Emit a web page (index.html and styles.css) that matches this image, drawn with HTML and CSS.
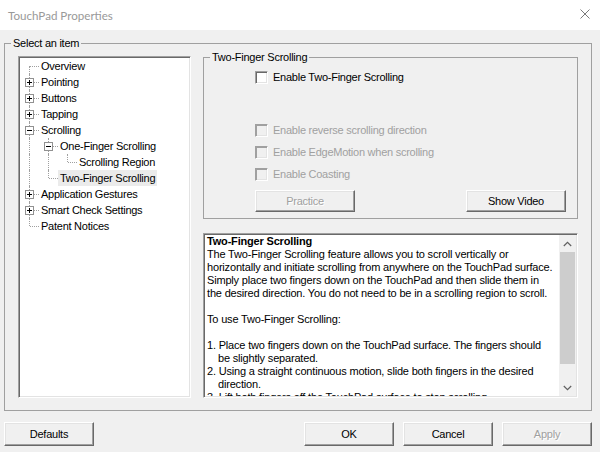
FILE: index.html
```html
<!DOCTYPE html>
<html lang="en">
<head>
  <meta charset="UTF-8">
  <meta name="viewport" content="width=device-width, initial-scale=1.0">
  <title>TouchPad Properties</title>
  <link rel="stylesheet" href="styles.css">
</head>
<body>
  <div class="titlebar">
    <span class="title">TouchPad Properties</span>
    <svg class="close" width="10" height="10" viewBox="0 0 10 10">
      <path d="M0.5 0.5 L9.5 9.5 M9.5 0.5 L0.5 9.5" stroke="#7a7a7a" stroke-width="1" fill="none"/>
    </svg>
  </div>

  <div class="dialog">
    <fieldset class="group outer">
      <legend>Select an item</legend>
      <div class="outer-body">

        <div class="tree">
          <div class="row"><span class="cell first"></span><span class="label">Overview</span></div>
          <div class="row"><span class="cell tee"><span class="exp plus"></span></span><span class="label">Pointing</span></div>
          <div class="row"><span class="cell tee"><span class="exp plus"></span></span><span class="label">Buttons</span></div>
          <div class="row"><span class="cell tee"><span class="exp plus"></span></span><span class="label">Tapping</span></div>
          <div class="row"><span class="cell tee"><span class="exp"></span></span><span class="label">Scrolling</span></div>
          <div class="row"><span class="cell pipe"></span><span class="cell tee"><span class="exp"></span></span><span class="label">One-Finger Scrolling</span></div>
          <div class="row"><span class="cell pipe"></span><span class="cell pipe"></span><span class="cell elbow"></span><span class="label">Scrolling Region</span></div>
          <div class="row"><span class="cell pipe"></span><span class="cell elbow"></span><span class="label sel">Two-Finger Scrolling</span></div>
          <div class="row"><span class="cell tee"><span class="exp plus"></span></span><span class="label">Application Gestures</span></div>
          <div class="row"><span class="cell tee"><span class="exp plus"></span></span><span class="label">Smart Check Settings</span></div>
          <div class="row"><span class="cell elbow"></span><span class="label">Patent Notices</span></div>
        </div>

        <div class="pane">
          <fieldset class="group settings">
            <legend>Two-Finger Scrolling</legend>
            <div class="settings-body">
              <div class="check"><span class="box"></span>Enable Two-Finger Scrolling</div>
              <div class="check off first-off"><span class="box"></span>Enable reverse scrolling direction</div>
              <div class="check off"><span class="box"></span>Enable EdgeMotion when scrolling</div>
              <div class="check off"><span class="box"></span>Enable Coasting</div>
              <div class="btn-row">
                <button class="btn wide" disabled>Practice</button>
                <button class="btn wide">Show Video</button>
              </div>
            </div>
          </fieldset>

          <div class="info">
            <div class="info-text">
              <div class="line head">Two-Finger Scrolling</div>
              <div class="line">The Two-Finger Scrolling feature allows you to scroll vertically or</div>
              <div class="line">horizontally and initiate scrolling from anywhere on the TouchPad surface.</div>
              <div class="line">Simply place two fingers down on the TouchPad and then slide them in</div>
              <div class="line">the desired direction. You do not need to be in a scrolling region to scroll.</div>
              <div class="line blank"></div>
              <div class="line">To use Two-Finger Scrolling:</div>
              <div class="line blank"></div>
              <div class="line">1. Place two fingers down on the TouchPad surface. The fingers should</div>
              <div class="line cont">be slightly separated.</div>
              <div class="line">2. Using a straight continuous motion, slide both fingers in the desired</div>
              <div class="line cont">direction.</div>
              <div class="line">3. Lift both fingers off the TouchPad surface to stop scrolling.</div>
            </div>
            <div class="scrollbar">
              <div class="arrow">
                <svg width="9" height="6" viewBox="0 0 9 6"><path d="M0.8 5 L4.5 1.3 L8.2 5" stroke="#606060" stroke-width="1.2" fill="none"/></svg>
              </div>
              <div class="thumb"></div>
              <div class="track"></div>
              <div class="arrow">
                <svg width="9" height="6" viewBox="0 0 9 6"><path d="M0.8 1 L4.5 4.7 L8.2 1" stroke="#606060" stroke-width="1.2" fill="none"/></svg>
              </div>
            </div>
          </div>
        </div>

      </div>
    </fieldset>

    <div class="footer">
      <button class="btn">Defaults</button>
      <div class="footer-right">
        <button class="btn">OK</button>
        <button class="btn">Cancel</button>
        <button class="btn" disabled>Apply</button>
      </div>
    </div>
  </div>
</body>
</html>
```

FILE: styles.css
```css
body {
    margin: 0;
    width: 600px;
    height: 452px;
    overflow: hidden;
    background-color: #f0f0f0;
    font-family: "Liberation Sans", Arial, sans-serif;
    font-size: 11px;
    letter-spacing: -0.25px;
    color: #000;
}

.titlebar {
    height: 30px;
    background: #fff;
    display: flex;
    align-items: center;
    justify-content: space-between;
    padding: 0 10px 0 8px;
}

.title {
    font-family: Lato, "Noto Sans", sans-serif;
    font-size: 11.6px;
    letter-spacing: 0;
    color: #999;
}

.close {
    display: block;
    margin-top: -2px;
}

.dialog {
    padding: 6px 0 0 4px;
    width: 588px;
}

/* group boxes */
.group {
    margin: 0;
    padding: 0;
    border: 1px solid #a0a0a0;
    min-width: 0;
}

.group legend {
    margin-left: 6px;
    padding: 0 2px;
    height: 14px;
    line-height: 14px;
}

.outer-body {
    display: flex;
    padding: 0 13px 12px 13px;
}

/* tree view */
.tree {
    width: 173px;
    height: 342px;
    margin-top: 6px;
    margin-right: 12px;
    padding: 1px;
    box-sizing: border-box;
    background: #fff;
    border: 1px solid;
    border-color: #a0a0a0 #fff #fff #a0a0a0;
    box-shadow: inset 1px 1px 0 #696969, inset -1px -1px 0 #e3e3e3;
    flex: none;
}

.row {
    display: flex;
    height: 16px;
    white-space: nowrap;
}

.cell {
    position: relative;
    width: 19px;
    height: 16px;
    flex: none;
}

.cell::before,
.cell::after {
    content: "";
    position: absolute;
}

/* vertical guide */
.pipe::before,
.tee::before {
    left: 9px;
    top: 0;
    height: 16px;
    border-left: 1px dotted #a0a0a0;
}

.elbow::before {
    left: 9px;
    top: 0;
    height: 8px;
    border-left: 1px dotted #a0a0a0;
}

.first::before {
    left: 9px;
    top: 8px;
    height: 8px;
    border-left: 1px dotted #a0a0a0;
}

/* horizontal guide */
.tee::after,
.elbow::after,
.first::after {
    left: 10px;
    top: 8px;
    width: 9px;
    border-top: 1px dotted #a0a0a0;
}

.exp {
    position: absolute;
    left: 5px;
    top: 4px;
    width: 9px;
    height: 9px;
    box-sizing: border-box;
    border: 1px solid #919191;
    background: #fff;
    z-index: 1;
}

.exp::before {
    content: "";
    position: absolute;
    left: 1px;
    top: 3px;
    width: 5px;
    height: 1px;
    background: #000;
}

.exp.plus::after {
    content: "";
    position: absolute;
    left: 3px;
    top: 1px;
    width: 1px;
    height: 5px;
    background: #000;
}

.label {
    padding: 0 2px;
    line-height: 16px;
}

.label.sel {
    background: #ebebeb;
}

/* right pane */
.pane {
    width: 375px;
    flex: none;
}

.settings-body {
    padding: 2px 11px 6px 51px;
}

.check {
    display: flex;
    align-items: center;
    height: 22px;
}

.check.first-off {
    margin-top: 31px;
}

.check.off {
    color: #a0a0a0;
}

.box {
    width: 13px;
    height: 13px;
    box-sizing: border-box;
    margin-right: 5px;
    background: #fff;
    border: 1px solid;
    border-color: #a0a0a0 #fff #fff #a0a0a0;
    box-shadow: inset 1px 1px 0 #696969, inset -1px -1px 0 #e3e3e3;
}

.check.off .box {
    background: #f0f0f0;
    box-shadow: inset 1px 1px 0 #a0a0a0, inset -1px -1px 0 #e3e3e3;
}

.btn-row {
    display: flex;
    justify-content: space-between;
    margin-top: 5px;
}

/* buttons */
.btn {
    width: 90px;
    height: 24px;
    padding: 0;
    box-sizing: border-box;
    background: #f0f0f0;
    border: 1px solid;
    border-color: #fff #696969 #696969 #fff;
    box-shadow: inset -1px -1px 0 #a0a0a0, inset 1px 1px 0 #e3e3e3;
    font-family: inherit;
    font-size: 11px;
    letter-spacing: -0.25px;
    color: #000;
}

.btn.wide {
    width: 100px;
    height: 22px;
}

.btn:disabled {
    color: #a0a0a0;
    text-shadow: 1px 1px 0 #fff;
}

/* info text box */
.info {
    display: flex;
    height: 165px;
    margin-top: 14px;
    padding: 1px;
    box-sizing: border-box;
    background: #fff;
    border: 1px solid;
    border-color: #a0a0a0 #fff #fff #a0a0a0;
    box-shadow: inset 1px 1px 0 #696969, inset -1px -1px 0 #e3e3e3;
}

.info-text {
    flex: 1;
    overflow: hidden;
    padding-left: 2px;
    letter-spacing: -0.18px;
}

.line {
    height: 13px;
    line-height: 13px;
    white-space: nowrap;
}

.line.head {
    font-weight: bold;
}

.line.cont {
    padding-left: 11px;
}

.scrollbar {
    width: 17px;
    flex: none;
    display: flex;
    flex-direction: column;
    background: #f0f0f0;
}

.arrow {
    height: 17px;
    display: flex;
    align-items: center;
    justify-content: center;
}

.thumb {
    height: 112px;
    margin: 0 1px;
    background: #cdcdcd;
}

.track {
    flex: 1;
}

/* bottom buttons */
.footer {
    display: flex;
    justify-content: space-between;
    margin-top: 11px;
}

.footer-right {
    display: flex;
    gap: 9px;
}
```
